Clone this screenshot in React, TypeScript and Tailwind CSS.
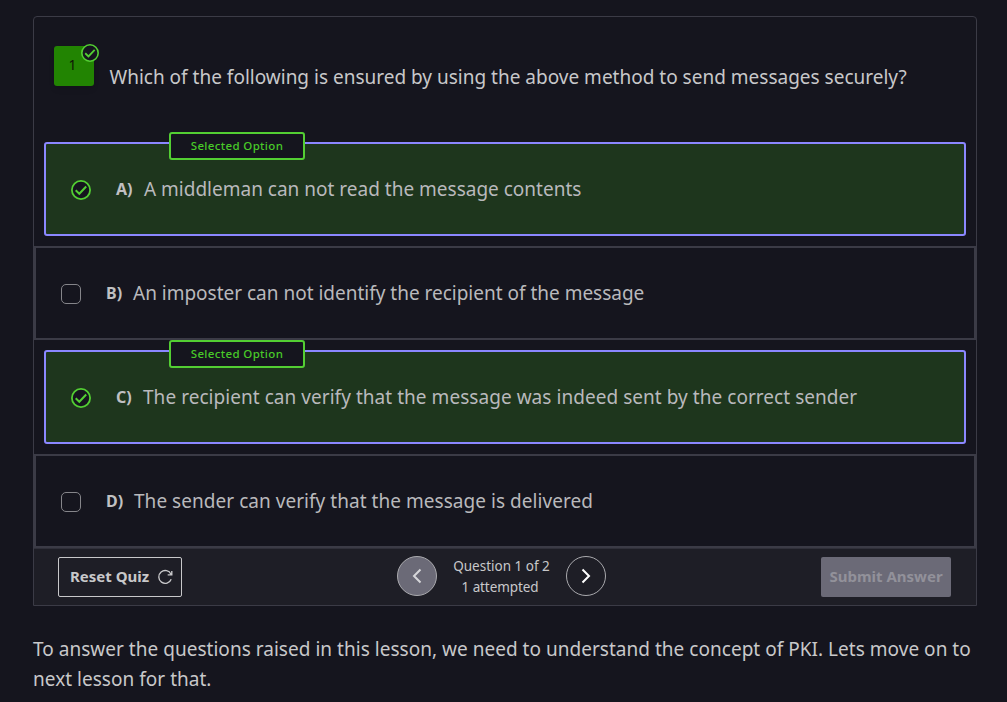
type Option = { letter: string; text: string; selected: boolean; spacing: string };

const options: Option[] = [
  { letter: "A", text: "A middleman can not read the message contents", selected: true, spacing: "ml-0 tracking-[0px]" },
  { letter: "B", text: "An imposter can not identify the recipient of the message", selected: false, spacing: "-ml-px tracking-[-0.01px]" },
  { letter: "C", text: "The recipient can verify that the message was indeed sent by the correct sender", selected: true, spacing: "-ml-px tracking-[0.045px]" },
  { letter: "D", text: "The sender can verify that the message is delivered", selected: false, spacing: "ml-0 tracking-[0.04px]" },
];

function CheckCircle({ className }: { className: string }) {
  return (
    <svg viewBox="0 0 20 20" fill="none" className={className}>
      <circle cx="10" cy="10" r="9.1" fill="#15151e" stroke="#53ce33" strokeWidth="1.8" />
      <path d="M4.7 10.3 8.3 13.8 15.2 6.5" stroke="#53ce33" strokeWidth="2" />
    </svg>
  );
}

function OptionRow({ option }: { option: Option }) {
  return (
    <div
      className={
        option.selected
          ? "relative m-[10px] flex h-[94px] items-center rounded-[3px] border-2 border-[#8b87ff] bg-[#1e361d] pl-[25px]"
          : "flex h-[94px] items-center border-2 border-[#3b3b46] pl-[25px]"
      }
    >
      {option.selected && (
        <div className="absolute left-[123px] top-[-12px] flex h-7 w-[136px] items-center justify-center rounded-[3px] border-2 border-[#53ce33] bg-[#15151e] text-[11.5px] font-medium leading-4 tracking-[0.35px] text-[#48c928]">
          Selected Option
        </div>
      )}
      {option.selected ? (
        <CheckCircle className="mt-[2px] size-5 shrink-0" />
      ) : (
        <span className="mt-[2px] size-5 shrink-0 rounded-[5px] border border-[#85858a]" />
      )}
      <span className="ml-[25px] w-[28px] whitespace-nowrap text-base font-bold leading-[30px] text-[#c0c0c2]">{option.letter})</span>
      <span className={`whitespace-nowrap text-[19px] leading-[30px] text-[#b9b9bc] ${option.spacing}`}>{option.text}</span>
    </div>
  );
}

export default function App() {
  return (
    <main className="h-[702px] w-[1007px] overflow-hidden bg-[#15151e] px-[33px] pt-4 font-['Noto_Sans',sans-serif] text-[#c8c8ca]">
      <section className="flex h-[590px] w-[944px] flex-col rounded-t border border-[#3b3b46]">
        <header className="flex h-[115px] items-start pl-5 pt-[29px]">
          <div className="relative flex size-10 shrink-0 justify-center rounded-[3px] bg-[#228402] pr-[3px] pt-[9px] text-sm leading-5 text-[#101607] shadow-md">
            1
            <CheckCircle className="absolute right-[-5px] top-[-2px] size-[18px]" />
          </div>
          <h1 className="ml-[15.5px] mt-4 whitespace-nowrap text-[19px] leading-[30px]">
            Which of the following is ensured by using the above method to send messages securely?
          </h1>
        </header>
        <div className="flex flex-col">
          {options.map((option) => (
            <OptionRow key={option.letter} option={option} />
          ))}
        </div>
        <footer className="flex flex-1 items-start border-t border-[#30303a] bg-[#1e1e26] pl-6 pr-[25px] pt-2">
          <button className="flex h-10 w-[124px] items-center justify-between whitespace-nowrap rounded-[2px] border border-[#c8c8ca] pl-[11px] pr-2 text-[15px] font-bold">
            <span className="pb-[2px]">Reset Quiz</span>
            <svg viewBox="0 0 16 16" fill="none" stroke="currentColor" strokeWidth="1.35" className="size-4">
              <path d="M14 5.2A6.4 6.4 0 1 0 14.2 10.2M14.8 1.9V5.8H10.7" />
            </svg>
          </button>
          <div className="ml-[215px] mt-[-1px] flex items-start">
            <button aria-label="Previous question" className="flex size-10 items-center justify-center rounded-full border border-[#aaaaae] bg-[#6b6a77]">
              <svg viewBox="0 0 16 16" fill="none" stroke="#d6d6d9" strokeWidth="2" className="size-4">
                <path d="M11.5 1.5 5 8l6.5 6.5" />
              </svg>
            </button>
            <div className="w-[129px] text-center text-[13.5px] leading-[21px]">
              <p>Question 1 of 2</p>
              <p className="pr-[3px] tracking-[-0.1px]">1 attempted</p>
            </div>
            <button aria-label="Next question" className="flex size-10 items-center justify-center rounded-full border border-[#aaaaae]">
              <svg viewBox="0 0 16 16" fill="none" stroke="#ffffff" strokeWidth="2" className="size-4">
                <path d="M4.5 1.5 11 8l-6.5 6.5" />
              </svg>
            </button>
          </div>
          <button className="ml-auto h-10 w-[130px] whitespace-nowrap rounded-[2px] bg-[#6b6a77] pb-[2px] text-[15px] font-bold text-[#92919a]">Submit Answer</button>
        </footer>
      </section>
      <p className="mt-7 whitespace-nowrap text-[19px] leading-[30px] tracking-[0.025px]">
        To answer the questions raised in this lesson, we need to understand the concept of PKI. Lets move on to
        <br />
        next lesson for that.
      </p>
    </main>
  );
}
